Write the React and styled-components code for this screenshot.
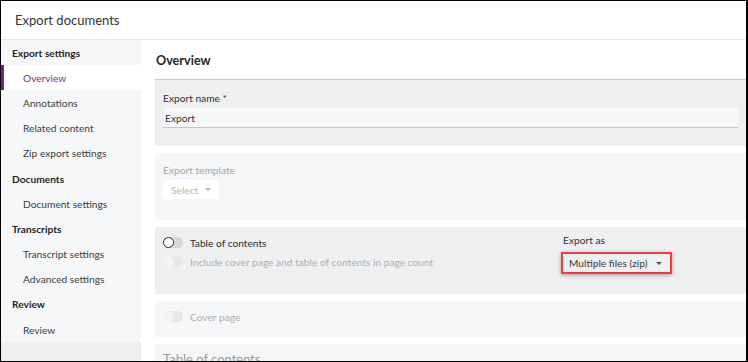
import React from "react";
import styled, { createGlobalStyle } from "styled-components";

const GlobalStyle = createGlobalStyle`
  html, body {
    margin: 0;
    padding: 0;
    background: #ffffff;
  }
  body {
    font-family: "Segoe UI", Lato, "Liberation Sans", sans-serif;
    color: #333333;
  }
  * {
    box-sizing: border-box;
  }
`;

const Frame = styled.div`
  width: 748px;
  height: 362px;
  border: 1px solid #000000;
  border-right-width: 2px;
  display: flex;
  flex-direction: column;
  overflow: hidden;
  background: #ffffff;
`;

const Header = styled.div`
  height: 39px;
  flex-shrink: 0;
  display: flex;
  align-items: center;
  padding-left: 14px;
  border-bottom: 1px solid #e6e7e8;
  font-size: 13px;
  color: #333333;
`;

const Body = styled.div`
  flex: 1;
  display: flex;
  min-height: 0;
`;

const Sidebar = styled.nav`
  width: 140px;
  flex-shrink: 0;
  background: #eeeff0;
`;

const NavList = styled.div`
  background: #f6f7f8;
`;

const GroupTitle = styled.div`
  height: 25.2px;
  display: flex;
  align-items: center;
  padding-left: 11px;
  font-size: 10.2px;
  font-weight: 700;
  color: #262626;
`;

const NavItem = styled.div`
  height: 25.2px;
  display: flex;
  align-items: center;
  padding-left: 19px;
  font-size: 10.2px;
  color: ${(p) => (p.$active ? "#7f2a86" : "#404040")};
  background: ${(p) => (p.$active ? "#ffffff" : "transparent")};
  border-left: 3px solid ${(p) => (p.$active ? "#7a1f82" : "transparent")};
`;

const Main = styled.main`
  flex: 1;
  padding-left: 14px;
  overflow: hidden;
`;

const PageTitle = styled.div`
  height: 40px;
  display: flex;
  align-items: center;
  padding-left: 1px;
  padding-top: 1px;
  border-bottom: 1px solid #c9cacb;
  font-size: 12.6px;
  font-weight: 700;
  color: #262626;
`;

const Panel = styled.section`
  height: ${(p) => p.$height}px;
  background: ${(p) => (p.$muted ? "#f5f6f8" : "#eeeff1")};
  margin-bottom: 7px;
  padding: ${(p) => p.$pad || "11px 8px 0"};
`;

const Label = styled.div`
  font-size: 10.2px;
  line-height: 14px;
  color: ${(p) => (p.$disabled ? "#a6a6a6" : "#333333")};
`;

const TextInput = styled.div`
  margin-top: 3px;
  height: 20px;
  display: flex;
  align-items: center;
  padding-left: 2px;
  background: #f6f7f8;
  border-bottom: 1px solid #c4c5c6;
  font-size: 10.2px;
  color: #333333;
`;

const Dropdown = styled.div`
  margin-top: ${(p) => (p.$highlight ? "5px" : "3px")};
  margin-left: ${(p) => (p.$highlight ? "-2px" : "0")};
  display: inline-flex;
  align-items: center;
  gap: ${(p) => (p.$highlight ? "9px" : "7px")};
  height: ${(p) => (p.$highlight ? "22px" : "19px")};
  padding: ${(p) => (p.$highlight ? "0 8px 0 6px" : "0 8px 0 8px")};
  background: ${(p) => (p.$highlight ? "transparent" : "#ffffff")};
  border: ${(p) => (p.$highlight ? "2px solid #ee3b45" : "none")};
  box-shadow: ${(p) =>
    p.$highlight ? "0 1px 4px rgba(0, 0, 0, 0.35)" : "none"};
  border-radius: ${(p) => (p.$highlight ? "0" : "2px")};
  font-size: 10.2px;
  color: ${(p) => (p.$disabled ? "#b5b5b5" : "#3a3a3a")};
`;

const Caret = styled.span`
  width: 0;
  height: 0;
  border-left: 3px solid transparent;
  border-right: 3px solid transparent;
  border-top: 3px solid ${(p) => (p.$disabled ? "#b5b5b5" : "#555555")};
`;

const Columns = styled.div`
  display: grid;
  grid-template-columns: 400px 1fr;
`;

const ToggleRow = styled.div`
  display: flex;
  align-items: center;
  gap: 7px;
  height: 19px;
`;

const Track = styled.span`
  position: relative;
  width: 20px;
  height: 11px;
  border-radius: 6px;
  background: ${(p) => (p.$disabled ? "#e6e7e9" : "#d5d6d8")};
  flex-shrink: 0;
`;

const Knob = styled.span`
  position: absolute;
  left: 0;
  top: 0;
  width: 11px;
  height: 11px;
  border-radius: 50%;
  background: ${(p) => (p.$disabled ? "#f2f3f4" : "#ffffff")};
  border: ${(p) => (p.$disabled ? "none" : "1.2px solid #2b2b2b")};
`;

const ToggleLabel = styled.span`
  font-size: 10.2px;
  color: ${(p) => (p.$disabled ? "#b0b0b0" : "#2e2e2e")};
`;

const CutTitle = styled.div`
  font-size: 13px;
  line-height: 16px;
  color: #9a9a9a;
  padding-top: 3px;
`;

const Toggle = ({ label, disabled }) => (
  <ToggleRow>
    <Track $disabled={disabled}>
      <Knob $disabled={disabled} />
    </Track>
    <ToggleLabel $disabled={disabled}>{label}</ToggleLabel>
  </ToggleRow>
);

const navGroups = [
  {
    title: "Export settings",
    items: ["Overview", "Annotations", "Related content", "Zip export settings"],
  },
  { title: "Documents", items: ["Document settings"] },
  { title: "Transcripts", items: ["Transcript settings", "Advanced settings"] },
  { title: "Review", items: ["Review"] },
];

export default function App() {
  return (
    <>
      <GlobalStyle />
      <Frame>
        <Header>Export documents</Header>
        <Body>
          <Sidebar>
            <NavList>
              {navGroups.map((group) => (
                <div key={group.title}>
                  <GroupTitle>{group.title}</GroupTitle>
                  {group.items.map((item) => (
                    <NavItem key={item} $active={item === "Overview"}>
                      {item}
                    </NavItem>
                  ))}
                </div>
              ))}
            </NavList>
          </Sidebar>
          <Main>
            <PageTitle>Overview</PageTitle>
            <Panel $height={66}>
              <Label>Export name *</Label>
              <TextInput>Export</TextInput>
            </Panel>
            <Panel $height={67} $muted $pad="10px 8px 0">
              <Label $disabled>Export template</Label>
              <Dropdown $disabled>
                Select <Caret $disabled />
              </Dropdown>
            </Panel>
            <Panel $height={67} $pad="6px 8px 0">
              <Columns>
                <div>
                  <Toggle label="Table of contents" />
                  <Toggle
                    label="Include cover page and table of contents in page count"
                    disabled
                  />
                </div>
                <div>
                  <Label>Export as</Label>
                  <Dropdown $highlight>
                    Multiple files (zip) <Caret />
                  </Dropdown>
                </div>
              </Columns>
            </Panel>
            <Panel $height={36} $muted $pad="6px 8px 0">
              <Toggle label="Cover page" disabled />
            </Panel>
            <Panel $height={40} $muted $pad="4px 8px 0">
              <CutTitle>Table of contents</CutTitle>
            </Panel>
          </Main>
        </Body>
      </Frame>
    </>
  );
}
